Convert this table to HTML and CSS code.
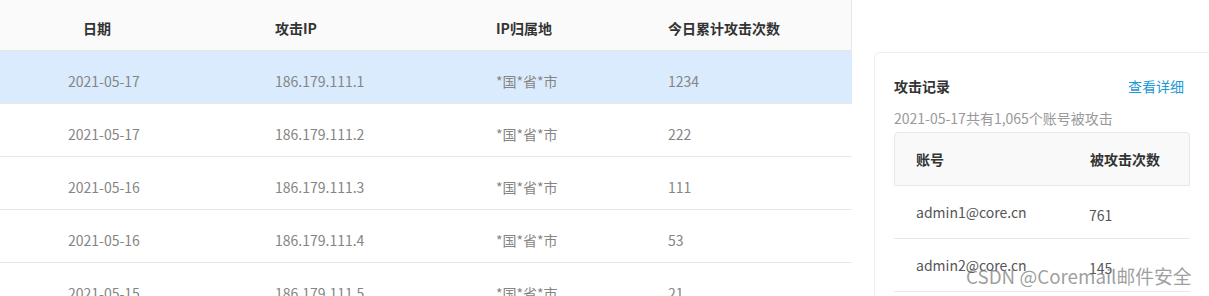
FILE: index.html
```html
<!DOCTYPE html>
<html lang="zh-CN">
<head>
<meta charset="utf-8">
<title>攻击记录</title>
<link rel="stylesheet" href="styles.css">
</head>
<body>
<div class="page">
  <div class="main-table">
    <div class="thead">
      <div class="th c1">日期</div>
      <div class="th">攻击IP</div>
      <div class="th">IP归属地</div>
      <div class="th">今日累计攻击次数</div>
    </div>
    <div class="tr active">
      <div class="td c1">2021-05-17</div>
      <div class="td">186.179.111.1</div>
      <div class="td">*国*省*市</div>
      <div class="td">1234</div>
    </div>
    <div class="tr">
      <div class="td c1">2021-05-17</div>
      <div class="td">186.179.111.2</div>
      <div class="td">*国*省*市</div>
      <div class="td">222</div>
    </div>
    <div class="tr">
      <div class="td c1">2021-05-16</div>
      <div class="td">186.179.111.3</div>
      <div class="td">*国*省*市</div>
      <div class="td">111</div>
    </div>
    <div class="tr">
      <div class="td c1">2021-05-16</div>
      <div class="td">186.179.111.4</div>
      <div class="td">*国*省*市</div>
      <div class="td">53</div>
    </div>
    <div class="tr">
      <div class="td c1">2021-05-15</div>
      <div class="td">186.179.111.5</div>
      <div class="td">*国*省*市</div>
      <div class="td">21</div>
    </div>
  </div>
  <div class="side">
    <div class="card">
      <div class="card-head">
        <span class="card-title">攻击记录</span>
        <a class="card-link">查看详细</a>
      </div>
      <div class="card-sub">2021-05-17共有1,065个账号被攻击</div>
      <div class="mini-table">
        <div class="mini-head">
          <div class="mini-c1">账号</div>
          <div class="mini-c2">被攻击次数</div>
        </div>
        <div class="mini-row">
          <div class="mini-c1">admin1@core.cn</div>
          <div class="mini-c2 count">761</div>
        </div>
        <div class="mini-row">
          <div class="mini-c1">admin2@core.cn</div>
          <div class="mini-c2 count">145</div>
        </div>
      </div>
    </div>
  </div>
</div>
<div class="watermark">CSDN @Coremail邮件安全</div>
</body>
</html>
```
FILE: styles.css
```css
html, body {
  margin: 0;
  padding: 0;
  background: #fff;
  overflow: hidden;
}
body {
  width: 1209px;
  height: 296px;
  position: relative;
  font-family: "Noto Sans CJK SC", "Noto Sans", sans-serif;
  font-size: 14px;
  color: #888;
}
.page {
  display: flex;
  align-items: flex-start;
  height: 296px;
  overflow: hidden;
}
.main-table {
  width: 852px;
  flex: none;
}
.thead, .tr {
  display: grid;
  grid-template-columns: 275px 221px 172px 1fr;
}
.thead {
  height: 50px;
  background: #fafafa;
  border-bottom: 1px solid #e6e6e6;
  border-right: 1px solid #e8e8e8;
  box-sizing: content-box;
  width: 851px;
}
.th {
  font-weight: bold;
  color: #333;
  line-height: 20px;
  padding-top: 18px;
}
.th.c1 {
  padding-left: 83px;
}
.tr {
  height: 52px;
  border-bottom: 1px solid #e8e8e8;
}
.tr.active {
  background: #d9ebfc;
}
.td {
  line-height: 20px;
  padding-top: 20px;
  color: #858585;
}
.td.c1 {
  padding-left: 68px;
}
.side {
  flex: none;
  padding-left: 22px;
  padding-top: 52px;
}
.card {
  width: 338px;
  box-sizing: border-box;
  border: 1px solid #eeeeee;
  border-radius: 6px;
  padding: 23px 20px 0 19px;
  height: 300px;
}
.card-head {
  display: flex;
  justify-content: space-between;
  line-height: 20px;
  padding-right: 7px;
}
.card-title {
  font-weight: bold;
  color: #333;
}
.card-link {
  color: #1b98d5;
  cursor: pointer;
}
.card-sub {
  margin-top: 12px;
  line-height: 20px;
  color: #999;
}
.mini-table {
  margin-top: 4px;
  width: 296px;
}
.mini-head, .mini-row {
  display: grid;
  grid-template-columns: 195px 1fr;
}
.mini-head {
  height: 52px;
  line-height: 52px;
  background: #f9f9f9;
  border: 1px solid #e8e8e8;
  border-radius: 4px 4px 0 0;
  font-weight: bold;
  color: #333;
}
.mini-row {
  height: 52px;
  line-height: 52px;
  border-bottom: 1px solid #e8e8e8;
  color: #555;
}
.mini-c1 {
  padding-left: 22px;
}
.mini-head .mini-c1 {
  padding-left: 21px;
}
.count {
  padding-top: 6px;
  line-height: 46px;
}
.watermark {
  position: absolute;
  left: 966px;
  top: 264px;
  font-size: 18.8px;
  line-height: 24px;
  color: rgba(115, 115, 115, 0.7);
  white-space: nowrap;
  pointer-events: none;
}
```
